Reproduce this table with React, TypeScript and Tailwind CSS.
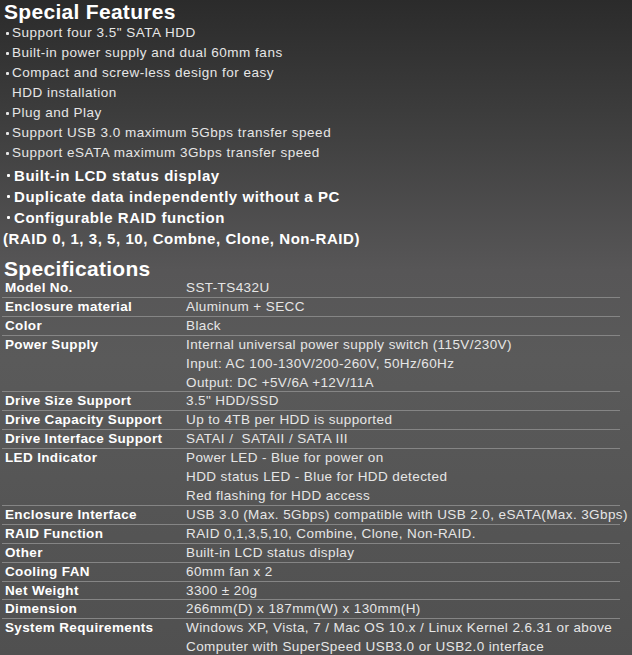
import React from 'react';

const features = [
  'Support four 3.5" SATA HDD',
  'Built-in power supply and dual 60mm fans',
  'Compact and screw-less design for easy',
];

const features2 = [
  'Plug and Play',
  'Support USB 3.0 maximum 5Gbps transfer speed',
  'Support eSATA maximum 3Gbps transfer speed',
];

const boldFeatures = [
  'Built-in LCD status display',
  'Duplicate data independently without a PC',
  'Configurable RAID function',
];

const specs: { label: string; value: string[] }[] = [
  { label: 'Model No.', value: ['SST-TS432U'] },
  { label: 'Enclosure material', value: ['Aluminum + SECC'] },
  { label: 'Color', value: ['Black'] },
  {
    label: 'Power Supply',
    value: [
      'Internal universal power supply switch (115V/230V)',
      'Input: AC 100-130V/200-260V, 50Hz/60Hz',
      'Output: DC +5V/6A +12V/11A',
    ],
  },
  { label: 'Drive Size Support', value: ['3.5" HDD/SSD'] },
  { label: 'Drive Capacity Support', value: ['Up to 4TB per HDD is supported'] },
  { label: 'Drive Interface Support', value: ['SATAI /  SATAII / SATA III'] },
  {
    label: 'LED Indicator',
    value: [
      'Power LED - Blue for power on',
      'HDD status LED - Blue for HDD detected',
      'Red flashing for HDD access',
    ],
  },
  {
    label: 'Enclosure Interface',
    value: ['USB 3.0 (Max. 5Gbps) compatible with USB 2.0, eSATA(Max. 3Gbps)'],
  },
  { label: 'RAID Function', value: ['RAID 0,1,3,5,10, Combine, Clone, Non-RAID.'] },
  { label: 'Other', value: ['Built-in LCD status display'] },
  { label: 'Cooling FAN', value: ['60mm fan x 2'] },
  { label: 'Net Weight', value: ['3300 ± 20g'] },
  { label: 'Dimension', value: ['266mm(D) x 187mm(W) x 130mm(H)'] },
  {
    label: 'System Requirements',
    value: [
      'Windows XP, Vista, 7 / Mac OS 10.x / Linux Kernel 2.6.31 or above',
      'Computer with SuperSpeed USB3.0 or USB2.0 interface',
    ],
  },
];

function Bullet({ text, bold }: { text: string; bold?: boolean }) {
  return (
    <div className="flex items-center whitespace-nowrap">
      {/* small square dot */}
      <span
        className={
          bold
            ? 'ml-[7px] mr-[4px] w-[3px] h-[3px] rounded-[1px] bg-current shrink-0'
            : 'ml-[6px] mr-[3px] w-[3px] h-[3px] rounded-[1px] bg-current shrink-0'
        }
      />
      <span>{text}</span>
    </div>
  );
}

export default function App() {
  return (
    <div
      className="w-[632px] h-[655px] overflow-hidden text-[#e6e6e6] bg-[linear-gradient(180deg,#2b2b2b_0px,#3c3c3c_110px,#575657_270px,#5a5a5a_360px,#505050_655px)]"
      style={{ fontFamily: '"Liberation Sans", Arial, sans-serif' }}
    >
      {/* Special Features */}
      <h2 className="pl-[4px] text-[21px] leading-[23px] font-bold tracking-[0.3px] text-white">
        Special Features
      </h2>
      <div className="text-[13.5px] leading-[20px] tracking-[0.5px]">
        {features.map((f) => (
          <Bullet key={f} text={f} />
        ))}
        <div className="pl-[12px] whitespace-nowrap">HDD installation</div>
        {features2.map((f) => (
          <Bullet key={f} text={f} />
        ))}
      </div>
      <div className="mt-[2px] text-[15px] leading-[21px] font-bold tracking-[0.55px] text-white">
        {boldFeatures.map((f) => (
          <Bullet key={f} text={f} bold />
        ))}
        <div className="pl-[3px] whitespace-nowrap">(RAID 0, 1, 3, 5, 10, Combne, Clone, Non-RAID)</div>
      </div>

      {/* Specifications */}
      <h2 className="mt-[10px] pl-[4px] text-[21px] leading-[20px] font-bold tracking-[0.3px] text-white">
        Specifications
      </h2>
      <div className="ml-[2px] w-[618px] text-[13.5px] leading-[18.9px]">
        {specs.map((s) => (
          <div key={s.label} className="grid grid-cols-[184px_1fr] shadow-[inset_0_-1px_0_#858585]">
            <div className="pl-[3px] font-bold text-white tracking-[0.35px] whitespace-nowrap">{s.label}</div>
            <div className="tracking-[0.4px] whitespace-pre">
              {s.value.map((v) => (
                <div key={v}>{v}</div>
              ))}
            </div>
          </div>
        ))}
      </div>
    </div>
  );
}
